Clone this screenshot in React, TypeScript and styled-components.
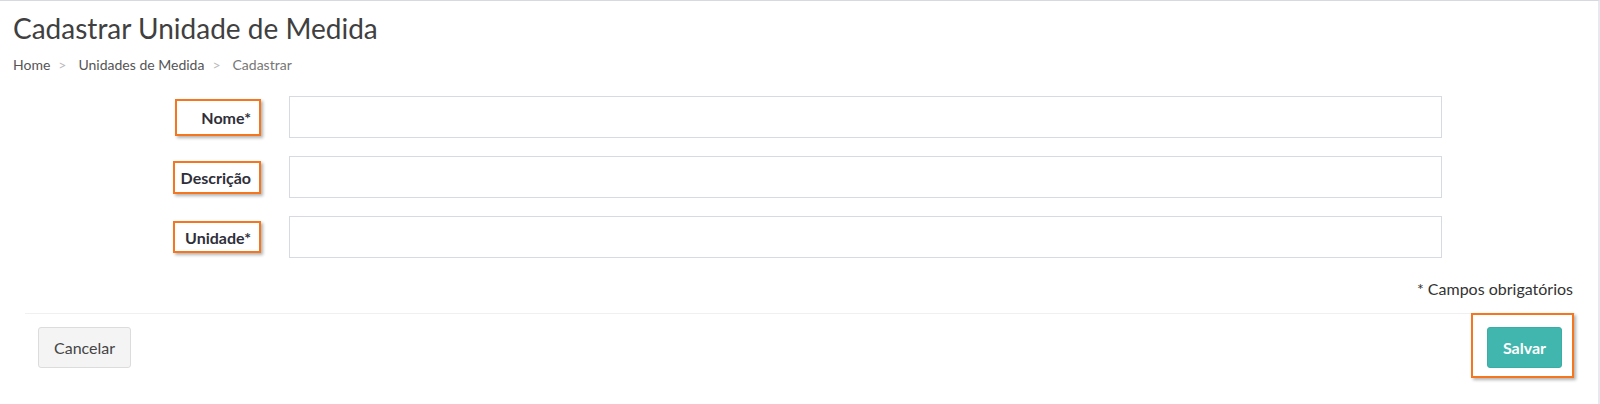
import React from "react";
import styled, { createGlobalStyle } from "styled-components";

const Global = createGlobalStyle`
  html, body { margin: 0; padding: 0; background: #ffffff; }
  body { font-family: Lato, "Open Sans", "DejaVu Sans", sans-serif; color: #333; }
  * { box-sizing: border-box; }
`;

const Page = styled.div`
  min-height: 404px;
  background: #fff;
  border-top: 1px solid #d6dae0;
  border-right: 2px solid #e6e9ef;
`;

const Header = styled.header`
  padding: 10px 13px 0;
`;

const Title = styled.h1`
  margin: 0 0 10px;
  font-size: 28px;
  line-height: 34px;
  font-weight: 400;
  color: #404040;
`;

const Crumbs = styled.nav`
  display: flex;
  align-items: center;
  font-size: 14px;
  line-height: 20px;
`;

const Crumb = styled.span<{ $active?: boolean }>`
  color: ${(p) => (p.$active ? "#777" : "#555")};
`;

const Sep = styled.span`
  color: #bbb;
  padding: 0 12px 0 8px;
`;

const Content = styled.div`
  padding: 0 23px 0 25px;
`;

const Form = styled.form`
  margin-top: 21px;
  display: grid;
  grid-template-columns: 236px 1153px;
  column-gap: 28px;
  row-gap: 18px;
  align-items: center;
`;

const LabelCell = styled.div`
  display: flex;
  justify-content: flex-end;
`;

const Label = styled.label<{ $w: number; $h: number }>`
  width: ${(p) => p.$w}px;
  height: ${(p) => p.$h}px;
  display: flex;
  align-items: center;
  justify-content: flex-end;
  padding-right: 8px;
  border: 2px solid #f5761f;
  box-shadow: 2px 2px 3px rgba(0, 0, 0, 0.3);
  font-size: 16px;
  font-weight: 700;
  color: #2f2f3a;
`;

const Input = styled.input`
  height: 42px;
  width: 100%;
  border: 1px solid #d8dae2;
  border-radius: 0;
  padding: 6px 12px;
  font-family: inherit;
  font-size: 16px;
  background: #fff;
  outline: none;
`;

const Note = styled.div`
  margin-top: 20px;
  padding-right: 2px;
  text-align: right;
  font-size: 16px;
  line-height: 22px;
  color: #333;
`;

const Footer = styled.div`
  margin-top: 13px;
  border-top: 1px solid #f0f0f0;
  padding: 13px 13px;
  display: flex;
  justify-content: space-between;
  align-items: center;
`;

const Button = styled.button<{ $primary?: boolean }>`
  height: 41px;
  padding: 0 15px;
  border-radius: 3px;
  font-family: inherit;
  font-size: 16px;
  font-weight: ${(p) => (p.$primary ? 700 : 400)};
  color: ${(p) => (p.$primary ? "#fff" : "#444")};
  background: ${(p) => (p.$primary ? "#40b6ae" : "#f4f4f4")};
  border: 1px solid ${(p) => (p.$primary ? "#3aaea6" : "#dcdcdc")};
  cursor: pointer;
`;

const Marked = styled.div`
  position: relative;
  display: inline-flex;
`;

const Highlight = styled.span`
  position: absolute;
  top: -14px;
  right: -12px;
  bottom: -10px;
  left: -16px;
  border: 2px solid #f5761f;
  box-shadow: 2px 2px 3px rgba(0, 0, 0, 0.3);
  pointer-events: none;
`;

const fields = [
  { id: "nome", label: "Nome*", w: 86, h: 37 },
  { id: "descricao", label: "Descrição", w: 88, h: 33 },
  { id: "unidade", label: "Unidade*", w: 88, h: 32 },
];

export default function App() {
  return (
    <>
      <Global />
      <Page>
        <Header>
          <Title>Cadastrar Unidade de Medida</Title>
          <Crumbs>
            <Crumb>Home</Crumb>
            <Sep>&gt;</Sep>
            <Crumb>Unidades de Medida</Crumb>
            <Sep>&gt;</Sep>
            <Crumb $active>Cadastrar</Crumb>
          </Crumbs>
        </Header>
        <Content>
          <Form onSubmit={(e) => e.preventDefault()}>
            {fields.map((f) => (
              <React.Fragment key={f.id}>
                <LabelCell>
                  <Label htmlFor={f.id} $w={f.w} $h={f.h}>
                    {f.label}
                  </Label>
                </LabelCell>
                <Input id={f.id} type="text" />
              </React.Fragment>
            ))}
          </Form>
          <Note>* Campos obrigatórios</Note>
          <Footer>
            <Button type="button">Cancelar</Button>
            <Marked>
              <Button type="button" $primary>
                Salvar
              </Button>
              <Highlight />
            </Marked>
          </Footer>
        </Content>
      </Page>
    </>
  );
}
